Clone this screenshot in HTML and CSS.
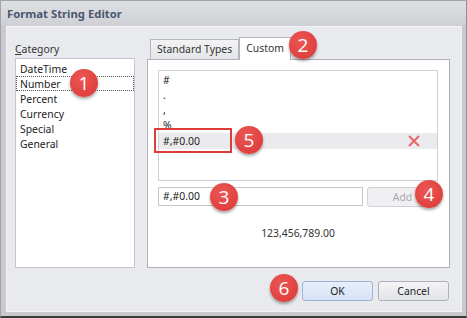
FILE: index.html
```html
<!DOCTYPE html>
<html lang="en">
<head>
    <meta charset="UTF-8">
    <title>Format String Editor</title>
    <link rel="stylesheet" href="styles.css">
</head>
<body>
    <div class="window">
        <div class="titlebar">Format String Editor</div>

        <div class="content">
            <div class="columns">
                <div class="category">
                    <div class="label"><u>C</u>ategory</div>
                    <ul class="listbox">
                        <li>DateTime</li>
                        <li class="focused">Number</li>
                        <li>Percent</li>
                        <li>Currency</li>
                        <li>Special</li>
                        <li>General</li>
                    </ul>
                </div>

                <div class="tabs">
                    <div class="tab-headers">
                        <div class="tab">Standard Types</div>
                        <div class="tab active">Custom</div>
                    </div>
                    <div class="tab-panel">
                        <ul class="listbox custom-list">
                            <li>#</li>
                            <li>.</li>
                            <li>,</li>
                            <li>%</li>
                            <li class="selected">
                                <span>#,#0.00</span>
                                <svg class="remove" width="12" height="12" viewBox="0 0 12 12">
                                    <path d="M1 1 L11 11 M11 1 L1 11" stroke="#e5686a" stroke-width="2" fill="none"/>
                                </svg>
                            </li>
                        </ul>
                        <div class="input-row">
                            <div class="textbox">#,#0.00</div>
                            <button class="btn btn-disabled">Add</button>
                        </div>
                        <div class="preview">123,456,789.00</div>
                    </div>
                </div>
            </div>

            <div class="footer">
                <button class="btn btn-default">OK</button>
                <button class="btn">Cancel</button>
            </div>

            <!-- callouts -->
            <div class="highlight"></div>
            <div class="badge b1">1</div>
            <div class="badge b2">2</div>
            <div class="badge b3">3</div>
            <div class="badge b4">4</div>
            <div class="badge b5">5</div>
            <div class="badge b6">6</div>
        </div>
    </div>
</body>
</html>
```

FILE: styles.css
```css
* {
    margin: 0;
    padding: 0;
    box-sizing: border-box;
}

body {
    font-family: 'Noto Sans', 'Open Sans', sans-serif;
    font-size: 10.4px;
    color: #222;
    background: #fff;
}

.window {
    width: 467px;
    height: 318px;
    background: #c9cace;
    border: 1px solid #a2a3a9;
    border-right-color: #8d8e93;
    border-bottom: 2px solid #3c3c3c;
    display: flex;
    flex-direction: column;
}

.titlebar {
    height: 25px;
    padding: 5px 0 0 6px;
    font-weight: bold;
    font-size: 11.3px;
    color: #4a566f;
    background: linear-gradient(#dfe0e4, #ced0d5);
}

.content {
    position: relative;
    flex: 1;
    margin: 0 4px 4px 5px;
    background: #e9eaee;
    border: 1px solid #f3f3f5;
    padding: 10px 10px 0 8px;
    display: flex;
    flex-direction: column;
}

.columns {
    display: flex;
    gap: 12px;
}

.category {
    width: 120px;
}

.label {
    margin-top: 5px;
    height: 16px;
    line-height: 14px;
    color: #333;
}

.listbox {
    list-style: none;
    background: #fff;
    border: 1px solid #c5c7cf;
    padding-top: 2px;
}

.category .listbox {
    height: 210px;
}

.listbox li {
    height: 15px;
    line-height: 15px;
    padding-left: 3px;
    border: 1px dotted transparent;
}

.listbox li.focused {
    border-color: #555;
}

.tabs {
    width: 303px;
}

.tab-headers {
    display: flex;
    align-items: flex-end;
    height: 22px;
    padding-left: 3px;
}

.tab {
    height: 20px;
    line-height: 18px;
    padding: 0 6px;
    border: 1px solid #b5b7be;
    border-bottom: none;
    background: linear-gradient(#f3f3f5, #e4e5e9);
    color: #333;
}

.tab.active {
    height: 23px;
    line-height: 20px;
    margin-bottom: -1px;
    background: #fff;
    padding: 0 6px;
    position: relative;
}

.tab-panel {
    height: 209px;
    background: #fff;
    border: 1px solid #b0b2b9;
    padding: 10px 11px 0 10px;
}

.custom-list {
    height: 111px;
    border-color: #cfd1d7;
}

.custom-list li {
    display: flex;
    align-items: center;
    justify-content: space-between;
    padding-right: 16px;
}

.custom-list li.selected {
    background: #ebebed;
    height: 16px;
}

.input-row {
    display: flex;
    gap: 4px;
    margin-top: 6px;
}

.textbox {
    width: 205px;
    height: 19px;
    line-height: 17px;
    padding-left: 4px;
    border: 1px solid #c5c7cf;
    background: #fff;
}

.btn {
    font-family: inherit;
    font-size: 10.4px;
    color: #222;
    height: 20px;
    width: 71px;
    border: 1px solid #adb0b8;
    border-radius: 3px;
    background: linear-gradient(#f4f4f6, #e3e4e8);
}

.btn-disabled {
    color: #a5a7ad;
    border-color: #d0d2d7;
    background: #f0f0f2;
}

.btn-default {
    border-color: #9db3d6;
    background: linear-gradient(#e7effb, #d6e2f6);
}

.preview {
    text-align: center;
    margin-top: 19px;
    color: #333;
}

.footer {
    display: flex;
    justify-content: flex-end;
    gap: 5px;
    margin-top: 13px;
    padding-right: 2px;
}

.highlight {
    position: absolute;
    left: 147px;
    top: 101px;
    width: 78px;
    height: 25px;
    border: 2px solid #df3b3a;
}

.badge {
    position: absolute;
    width: 28px;
    height: 28px;
    border-radius: 50%;
    background: radial-gradient(circle at 40% 35%, #ec5654, #d93836);
    color: #fff;
    font-family: 'Open Sans', sans-serif;
    font-size: 19px;
    line-height: 28px;
    text-align: center;
    box-shadow: 0 2px 3px rgba(0, 0, 0, 0.35);
}

.b1 { left: 63px;  top: 42px; }
.b2 { left: 282px; top: 4px; }
.b3 { left: 203px; top: 156px; }
.b4 { left: 408px; top: 153px; }
.b5 { left: 228px; top: 99px; }
.b6 { left: 263px; top: 247px; }
```
